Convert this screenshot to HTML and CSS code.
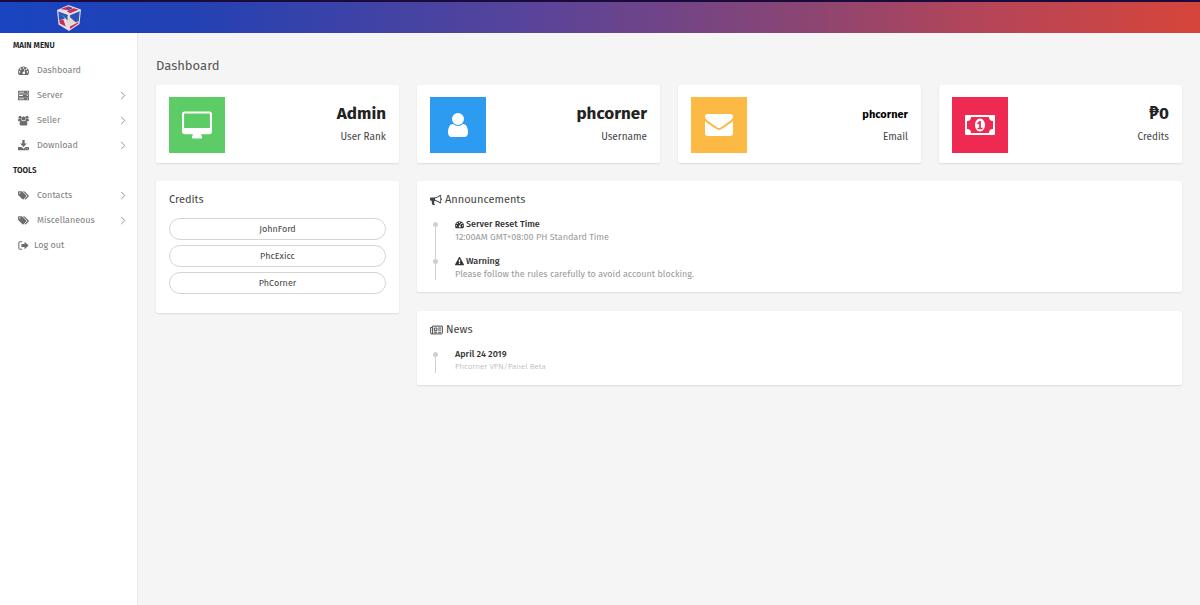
FILE: index.html
```html
<!DOCTYPE html>
<html lang="en">
<head>
<meta charset="utf-8">
<title>Dashboard</title>
<link rel="stylesheet" href="styles.css">
</head>
<body>
<svg class="sprite" aria-hidden="true">
  <symbol id="gauge" viewBox="0 0 16 16"><path fill-rule="evenodd" d="M8 2a8 8 0 0 0-8 8c0 1.500.4 2.900 1.200 4.100.2.300.4.400.7.400h12.200c.3 0 .5-.1.700-.4A8 8 0 0 0 8 2zM2.300 8.900a1.100 1.100 0 1 1 0 2.200 1.100 1.100 0 0 1 0-2.200zM4 4.900a1.100 1.100 0 1 1 0 2.200 1.100 1.100 0 0 1 0-2.200zM8 3.200a1.100 1.100 0 1 1 0 2.200 1.100 1.100 0 0 1 0-2.200zM12 4.900a1.100 1.100 0 1 1 0 2.200 1.100 1.100 0 0 1 0-2.200zM13.700 8.900a1.100 1.100 0 1 1 0 2.200 1.100 1.100 0 0 1 0-2.200zM9.300 6.300l1 .3-.9 3.400a1.800 1.800 0 1 1-1-.3z"/></symbol>
  <symbol id="server" viewBox="0 0 16 16"><path fill-rule="evenodd" d="M0 1h16v4.300H0zM0 6h16v4H0zM0 10.700h16V15H0zM1.500 2.500v1.200H9V2.500zM1.500 7.400v1.200H7V7.400zM1.500 12.300v1.200H9v-1.200zM13 2.300v1.400h1.400V2.300zM13 7.300v1.400h1.400V7.300zM13 12.300v1.400h1.400v-1.400z"/></symbol>
  <symbol id="users" viewBox="0 0 16 16"><circle cx="3" cy="3.200" r="2.200"/><circle cx="13" cy="3.200" r="2.200"/><circle cx="8" cy="5" r="3"/><path d="M0 8.500c0-2 .5-3.200 1.300-3.200 1 .8 2.400.8 3.400.2 0 1 .3 1.700.8 2.400-1.200 0-2 .4-2.600 1.100H1.300C.5 9 0 8.900 0 8.500zM16 8.500c0-2-.5-3.200-1.300-3.200-1 .8-2.400.8-3.400.2 0 1-.3 1.700-.8 2.400 1.200 0 2 .4 2.600 1.100h1.600c.8 0 1.300-.1 1.300-.5zM2.400 13c0-2.600.8-4.900 2.800-4.900 1.600 1.200 4 1.200 5.600 0 2 0 2.800 2.300 2.800 4.900 0 1.300-.8 2.200-2.200 2.200H4.600c-1.400 0-2.200-.9-2.200-2.200z"/></symbol>
  <symbol id="download" viewBox="0 0 16 16"><path fill-rule="evenodd" d="M6.300 0h3.400v5H13L8 10.300 3 5h3.300zM.7 10H5l3 2.800L11 10h4.300c.4 0 .7.300.7.700v3.600c0 .4-.3.700-.7.700H.7a.7.7 0 0 1-.7-.7v-3.600c0-.4.3-.7.7-.7zM11 12.500v1h1v-1zM13.200 12.500v1h1v-1z"/></symbol>
  <symbol id="tags" viewBox="0 0 18 16"><path fill-rule="evenodd" d="M0 2.200C0 1.500.5 1 1.200 1h4.300c.7 0 1.500.3 2 .8l6 6c.5.5.5 1.200 0 1.700L9 14c-.5.5-1.200.5-1.700 0l-6.500-6.500C.3 7 0 6.200 0 5.500zM3 2.800A1.200 1.200 0 1 0 3 5.200 1.200 1.200 0 0 0 3 2.800z"/><path d="M8 1h1.500c.7 0 1.500.3 2 .8l6 6c.5.5.5 1.200 0 1.700L13 14c-.6.600-1.300.5-1.900 0l-.4-.4 4.100-4.100c.5-.5.500-1.200 0-1.700z"/></symbol>
  <symbol id="logout" viewBox="0 0 16 16"><path d="M6 2.700H3A1.700 1.700 0 0 0 1.200 4.500v7A1.700 1.700 0 0 0 3 13.300h3" fill="none" stroke="currentColor" stroke-width="1.500"/><path d="M9.500 2.700L15.500 8l-6 5.300v-3.200H5V5.900h4.500z"/></symbol>
  <symbol id="chevron" viewBox="0 0 6 10"><path d="M1 1l4 4-4 4" fill="none" stroke="currentColor"/></symbol>
  <symbol id="desktop" viewBox="0 0 1856 1664"><path d="M1728 992v-832q0-13-9.500-22.500t-22.500-9.500h-1536q-13 0-22.500 9.500t-9.500 22.500v832q0 13 9.500 22.500t22.500 9.500h1536q13 0 22.500-9.500t9.500-22.500zm128-832v1088q0 66-47 113t-113 47h-512q0 37 16 77.500t32 71 16 43.500q0 26-19 45t-45 19h-512q-26 0-45-19t-19-45q0-14 16-44t32-70 16-78h-512q-66 0-113-47t-47-113v-1088q0-66 47-113t113-47h1536q66 0 113 47t47 113z"/></symbol>
  <symbol id="user" viewBox="0 0 1792 1792"><path d="M1536 1399q0 109-62.500 187t-150.500 78h-854q-88 0-150.500-78t-62.500-187q0-85 8.500-160.500t31.500-152 58.500-131 94-89 134.500-34.500q131 128 313 128t313-128q76 0 134.500 34.500t94 89 58.500 131 31.500 152 8.500 160.500zm-256-887q0 159-112.500 271.500t-271.500 112.500-271.500-112.500-112.500-271.500 112.500-271.500 271.500-112.500 271.500 112.500 112.500 271.500z"/></symbol>
  <symbol id="envelope" viewBox="0 64 1792 1792"><path d="M1792 710v794q0 66-47 113t-113 47h-1472q-66 0-113-47t-47-113v-794q44 49 101 87 362 246 497 345 57 42 92.500 65.500t94.500 48 110 24.500h2q51 0 110-24.500t94.500-48 92.500-65.500q170-123 498-345 57-39 100-87zm0-294q0 79-49 151t-122 123q-376 261-468 325-10 7-42.500 31t-54 38.500-52 32.500-57.500 27-50 9h-2q-23 0-50-9t-57.500-27-52-32.500-54-38.500-42.500-31q-91-64-262-182.500t-205-142.500q-62-42-117-115.500t-55-136.500q0-78 41.500-130t118.500-52h1472q65 0 112.500 47t47.500 113z"/></symbol>
  <symbol id="money" viewBox="0 0 30 20"><path fill-rule="evenodd" d="M1 0h28a1 1 0 0 1 1 1v18a1 1 0 0 1-1 1H1a1 1 0 0 1-1-1V1a1 1 0 0 1 1-1zM6 2a4 4 0 0 1-4 4v8a4 4 0 0 1 4 4h18a4 4 0 0 1 4-4V6a4 4 0 0 1-4-4z"/><path fill-rule="evenodd" d="M15 3.500c3 0 5 3 5 6.500s-2 6.500-5 6.500-5-3-5-6.500 2-6.500 5-6.500zM14.500 6L12 8.200l1.100 1.200 1.100-.9v4.200h-1.700v1.500h5v-1.500h-1.600V6z"/></symbol>
  <symbol id="bullhorn" viewBox="0 0 1792 1792"><path d="M1664 640q53 0 90.500 37.500t37.500 90.500-37.500 90.500-90.500 37.500v384q0 52-38 90t-90 38q-417-347-812-380-58 19-91 66t-31 100.500 40 92.500q-20 33-23 65.500t6 58 33.500 55 48 50 61.500 50.500q-29 58-111.500 83t-168.500 11.500-132-55.500q-7-23-29.500-87.500t-32-94.500-23-89-15-101 3.500-98.500 22-110.500h-122q-66 0-113-47t-47-113v-192q0-66 47-113t113-47h480q435 0 896-384 52 0 90 38t38 90v384zm-128 604v-954q-394 302-768 343v270q377 42 768 341z"/></symbol>
  <symbol id="warning" viewBox="0 0 1792 1792"><path d="M1024 1375v-190q0-14-9.500-23.500t-22.500-9.500h-192q-13 0-22.500 9.500t-9.500 23.500v190q0 14 9.500 23.500t22.500 9.500h192q13 0 22.500-9.500t9.500-23.500zm-2-374l18-459q0-12-10-19-13-11-24-11h-220q-11 0-24 11-10 7-10 21l17 457q0 10 10 16.500t24 6.500h185q14 0 23.500-6.500t10.500-16.500zm-14-934l768 1408q35 63-2 126-17 29-46.500 46t-63.500 17h-1536q-34 0-63.500-17t-46.500-46q-37-63-2-126l768-1408q17-31 47-49t65-18 65 18 47 49z"/></symbol>
  <symbol id="newspaper" viewBox="0 0 20 16"><path fill="none" stroke="currentColor" stroke-width="1.500" d="M4 2h15v10.500a1.500 1.500 0 0 1-1.500 1.500H2.500A1.500 1.500 0 0 1 1 12.500V4h3zM4 4v8.500A1.500 1.500 0 0 1 2.500 14M6.700 5h4v4h-4zM12.500 5h4.500M12.500 8h4.500M6 11.500h5M12.500 11.500h4.500"/></symbol>
</svg>

<header class="topbar">
  <a class="brand" href="#" aria-label="Home">
    <svg class="logo" viewBox="0 0 26 26" aria-hidden="true">
      <path fill="#e6dcea" d="M12.500 0L25 4.500 23.500 19 13 26 2.500 19.500 1 5z"/>
      <path fill="#c9304f" d="M12.500 1.300l4.500 1.600-7 2.200-5.500-1zM18 3.300l4.500 1.400L14 8.300 10.500 6z"/>
      <path fill="#3d4fb5" d="M10.500 3.400l4-1 2 1.400-4.500 1.500z"/>
      <path fill="#2c55b4" d="M2.300 6.400L12 10v6l-5-5.500-4.200-1z"/>
      <path fill="#2c55b4" d="M2.700 9L7 10.500l2 3-6 2z"/>
      <path fill="#cf2b4a" d="M3.300 15.500l4-1 2.500 7-6-3z"/>
      <path fill="#2c55b4" d="M23.700 6.300L14 10.300v2l5.500 5 3.200-1z"/>
      <path fill="#cf2b4a" d="M22.500 17l-.3 1.400-8.200 5.600v-2.500z"/>
      <path fill="#e3d9cd" d="M11.500 10.500l7 6.500-7 5z"/>
    </svg>
  </a>
</header>

<div class="shell">
  <nav class="sidebar" aria-label="Main">
    <h2 class="menu-title">MAIN MENU</h2>
    <ul class="menu">
      <li><a class="menu-link" href="#"><svg class="menu-icon"><use href="#gauge"/></svg><span>Dashboard</span></a></li>
      <li><a class="menu-link" href="#"><svg class="menu-icon"><use href="#server"/></svg><span>Server</span><svg class="chevron"><use href="#chevron"/></svg></a></li>
      <li><a class="menu-link" href="#"><svg class="menu-icon"><use href="#users"/></svg><span>Seller</span><svg class="chevron"><use href="#chevron"/></svg></a></li>
      <li><a class="menu-link" href="#"><svg class="menu-icon"><use href="#download"/></svg><span>Download</span><svg class="chevron"><use href="#chevron"/></svg></a></li>
    </ul>
    <h2 class="menu-title">TOOLS</h2>
    <ul class="menu">
      <li><a class="menu-link" href="#"><svg class="menu-icon"><use href="#tags"/></svg><span>Contacts</span><svg class="chevron"><use href="#chevron"/></svg></a></li>
      <li><a class="menu-link" href="#"><svg class="menu-icon"><use href="#tags"/></svg><span>Miscellaneous</span><svg class="chevron"><use href="#chevron"/></svg></a></li>
      <li><a class="menu-link menu-link-tight" href="#"><svg class="menu-icon"><use href="#logout"/></svg><span>Log out</span></a></li>
    </ul>
  </nav>

  <main class="content">
    <h1 class="page-title">Dashboard</h1>
    <div class="grid">
      <section class="card stat">
        <div class="tile green"><svg class="tile-icon"><use href="#desktop"/></svg></div>
        <div class="stat-text"><strong class="stat-value">Admin</strong><span class="stat-label">User Rank</span></div>
      </section>
      <section class="card stat">
        <div class="tile blue"><svg class="tile-icon"><use href="#user"/></svg></div>
        <div class="stat-text"><strong class="stat-value">phcorner</strong><span class="stat-label">Username</span></div>
      </section>
      <section class="card stat">
        <div class="tile amber"><svg class="tile-icon"><use href="#envelope"/></svg></div>
        <div class="stat-text"><strong class="stat-value small">phcorner</strong><span class="stat-label">Email</span></div>
      </section>
      <section class="card stat">
        <div class="tile red"><svg class="tile-icon"><use href="#money"/></svg></div>
        <div class="stat-text"><strong class="stat-value">₱0</strong><span class="stat-label">Credits</span></div>
      </section>

      <section class="card credits">
        <h2 class="card-title">Credits</h2>
        <div class="pills">
          <button class="pill" type="button">JohnFord</button>
          <button class="pill" type="button">PhcExicc</button>
          <button class="pill" type="button">PhCorner</button>
        </div>
      </section>

      <div class="feeds">
        <section class="card">
          <h2 class="card-title"><svg class="title-icon"><use href="#bullhorn"/></svg>Announcements</h2>
          <ul class="timeline">
            <li class="event">
              <h3 class="event-title"><svg class="event-icon"><use href="#gauge"/></svg>Server Reset Time</h3>
              <p class="event-text">12:00AM GMT+08:00 PH Standard Time</p>
            </li>
            <li class="event">
              <h3 class="event-title"><svg class="event-icon"><use href="#warning"/></svg>Warning</h3>
              <p class="event-text">Please follow the rules carefully to avoid account blocking.</p>
            </li>
          </ul>
        </section>
        <section class="card">
          <h2 class="card-title"><svg class="title-icon wide"><use href="#newspaper"/></svg>News</h2>
          <ul class="timeline">
            <li class="event">
              <h3 class="event-title">April 24 2019</h3>
              <p class="event-text faint">Phcorner VPN/Panel Beta</p>
            </li>
          </ul>
        </section>
      </div>
    </div>
  </main>
</div>
</body>
</html>
```
FILE: styles.css
```css
* { box-sizing: border-box; }

body {
  margin: 0;
  min-height: 100vh;
  display: flex;
  flex-direction: column;
  background: #f5f5f5;
  color: #444;
  font-family: "Fira Sans", "Noto Sans", sans-serif;
  font-size: 9px;
  line-height: 13px;
}

h1, h2, h3, p, ul { margin: 0; padding: 0; }
ul { list-style: none; }
svg { fill: currentColor; flex: none; }
.sprite { position: absolute; width: 0; height: 0; }

.topbar {
  height: 33px;
  flex: none;
  border-top: 2px solid #1b0b3d;
  background: linear-gradient(90deg, #1945c0 0%, #2241b4 15%, #5a4499 45%, #8b4573 67%, #b54558 82%, #d6453a 100%);
}
.brand { display: flex; width: 137px; height: 31px; align-items: center; justify-content: center; }
.logo { width: 26px; height: 26px; }

.shell { flex: 1; display: flex; }

.sidebar {
  width: 138px;
  flex: none;
  background: #fff;
  border-right: 1px solid #e9e9e9;
}
.menu-title {
  padding: 0 13px;
  font-size: 8px;
  line-height: 25px;
  font-weight: 600;
  color: #222;
}
.menu-link {
  display: flex;
  align-items: center;
  gap: 8px;
  height: 25px;
  padding: 0 11px 0 18px;
  color: #808080;
  text-decoration: none;
}
.menu-link-tight { gap: 5px; }
.menu-icon { width: 11px; height: 11px; color: #6c6c6c; }
.chevron { width: 6px; height: 9px; margin-left: auto; color: #888; }

.content { flex: 1; min-width: 0; padding: 25px 18px; }
.page-title {
  margin-bottom: 11px;
  font-size: 13px;
  line-height: 16px;
  font-weight: 400;
  color: #555;
}

.grid {
  display: grid;
  grid-template-columns: repeat(4, minmax(0, 1fr));
  gap: 18px;
  align-items: start;
}
.card {
  padding: 12px 13px;
  background: #fff;
  border-radius: 2px;
  box-shadow: 0 1px 2px rgba(0, 0, 0, 0.1);
}

.stat { display: flex; justify-content: space-between; height: 78px; }
.tile { display: grid; place-items: center; width: 56px; height: 56px; color: #fff; }
.tile-icon { width: 30px; height: 28px; }
.green { background: #5dcc66; }
.blue { background: #2c9bf0; }
.amber { background: #fcb944; }
.red { background: #ee2a52; }
.stat-text { display: flex; flex-direction: column; text-align: right; padding-top: 4px; }
.stat-value { font-size: 17px; line-height: 26px; font-weight: 700; color: #222; }
.stat-value.small { font-size: 11px; line-height: 28px; color: #000; }
.stat-value.small + .stat-label { line-height: 16px; }
.stat-label { font-size: 10px; line-height: 20px; }

.card-title {
  display: flex;
  align-items: center;
  gap: 3px;
  font-size: 11px;
  line-height: 14px;
  font-weight: 400;
}
.title-icon { width: 12px; height: 12px; }
.title-icon.wide { width: 13px; }

.credits { min-height: 132px; }
.pills { display: grid; gap: 5px; margin-top: 11px; }
.pill {
  height: 22px;
  border: 1px solid #d5d5d5;
  border-radius: 11px;
  background: #fff;
  color: #444;
  font: inherit;
}

.feeds { grid-column: span 3; display: grid; gap: 19px; }
.timeline { margin-top: 11px; }
.event { position: relative; padding: 0 0 12px 25px; }
.event:last-child { padding-bottom: 0; }
.event::before {
  content: "";
  position: absolute;
  left: 5px;
  top: 4px;
  bottom: 0;
  width: 1px;
  background: #d0d0d0;
}
.event:not(:last-child)::before { bottom: -4px; }
.event::after {
  content: "";
  position: absolute;
  left: 3px;
  top: 4px;
  width: 5px;
  height: 5px;
  border-radius: 50%;
  background: #d0d0d0;
}
.event-title { display: flex; align-items: center; gap: 2px; font-size: 9px; font-weight: 500; color: #333; }
.event-icon { width: 9px; height: 9px; }
.event-text { color: #999; line-height: 12px; }
.event-text.faint { font-size: 8px; font-weight: 300; color: #aaa; }
```
